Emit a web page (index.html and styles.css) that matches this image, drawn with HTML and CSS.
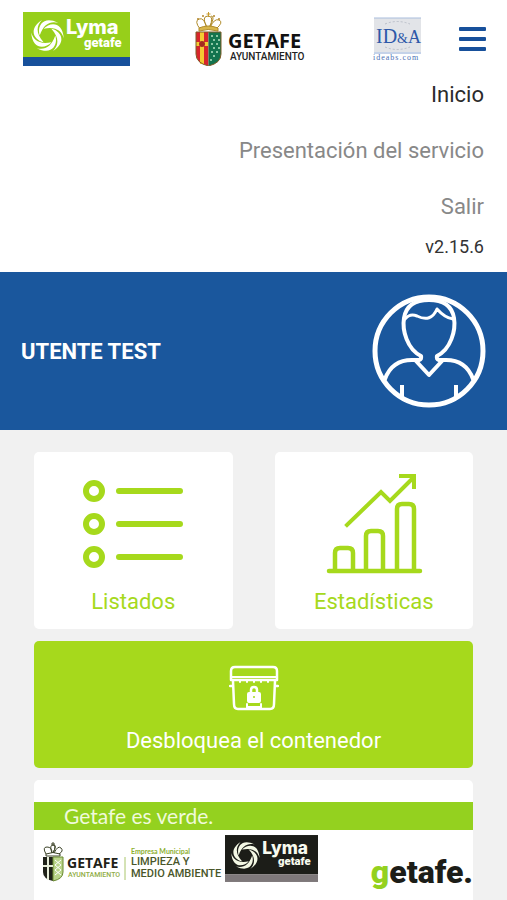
FILE: index.html
```html
<!DOCTYPE html>
<html lang="es">
<head>
<meta charset="utf-8">
<meta name="viewport" content="width=device-width, initial-scale=1">
<title>Lyma Getafe</title>
<link rel="stylesheet" href="styles.css">
</head>
<body>
<svg class="defs" aria-hidden="true">
  <defs>
    <path id="blade" d="M-8 0C-11 -9 -5 -21 11 -13C3 -15 -4 -12 -8 0Z"/>
    <symbol id="swirl" viewBox="-18 -18 36 36">
      <use href="#blade"/>
      <use href="#blade" transform="rotate(60)"/>
      <use href="#blade" transform="rotate(120)"/>
      <use href="#blade" transform="rotate(180)"/>
      <use href="#blade" transform="rotate(240)"/>
      <use href="#blade" transform="rotate(300)"/>
    </symbol>
  </defs>
</svg>

<header class="header">
  <a class="logo" href="#" aria-label="Lyma Getafe">
    <svg width="107" height="54" viewBox="0 0 107 54">
      <rect width="107" height="45" fill="#97cf1a"/>
      <rect y="45" width="107" height="9" fill="#17509b"/>
      <use href="#swirl" x="7" y="6" width="35" height="35" fill="#fff"/>
      <g fill="#fff">
        <text class="lyma-name" x="43" y="22" font-size="20">Lyma</text>
        <text class="lyma-sub" x="61" y="35" font-size="13">getafe</text>
      </g>
    </svg>
  </a>
  <a class="logo" href="#" aria-label="Getafe Ayuntamiento">
    <svg width="115" height="54" viewBox="0 0 115 54">
      <g stroke="#b08b2a" stroke-width="1" fill="none">
        <path d="M6 17Q0 9 5 7T13 16M13 16Q7 4 14 4T15 16M15 16Q22 4 17 4M16 16Q20 6 25 8T22 17" />
        <path d="M5 16Q14 12 24 16V19Q14 16 5 19Z" fill="#d8b64a"/>
        <path d="M14.500 0V5M12.500 2H16.500" stroke="#c79a2c"/>
      </g>
      <g fill="#b3862a"><circle cx="4" cy="7" r="1"/><circle cx="9" cy="4" r="1"/><circle cx="20" cy="4" r="1"/><circle cx="25" cy="7" r="1"/></g>
      <path d="M2 20H14.500V54Q2 51 2 42Z" fill="#d8252b"/>
      <path d="M14.500 20H27V42Q27 51 14.500 54Z" fill="#13744e"/>
      <path d="M8 20V52" stroke="#f4cb32" stroke-width="4"/>
      <path d="M2 32H14" stroke="#f4cb32" stroke-width="4"/>
      <circle cx="8" cy="32" r="3" fill="#a62b20"/>
      <path d="M17 24h2m3 0h2m-5 4h2m3 0h2m-9 4h2m3 0h2m-5 4h2m3 0h2m-9 4h2m3 0h2m-5 4h2m-5 4h2" stroke="#8cc7a4" stroke-width="2"/>
      <path d="M2 20H27V42Q27 51 14.500 54Q2 51 2 42Z" fill="none" stroke="#7e5c27"/>
      <text class="crest-name" x="34" y="36" font-size="20" fill="#111">GETAFE</text>
      <text class="crest-sub" x="36" y="48" font-size="10" fill="#222">AYUNTAMIENTO</text>
    </svg>
  </a>
  <div class="header-end">
    <a class="logo" href="#" aria-label="ideabs.com">
      <svg width="50" height="44" viewBox="0 0 50 44">
        <rect x="1" y="1" width="47" height="34" fill="#e2e4e8"/>
        <path d="M1 1H48" stroke="#a9bddc"/>
        <path d="M12 7Q24 2 37 7M12 30Q24 35 37 30" fill="none" stroke="#b9bec8" stroke-dasharray="2 2"/>
        <text class="serif" x="3" y="26" font-size="20" fill="#2d58a8">ID<tspan font-size="14">&amp;</tspan><tspan font-size="18">A</tspan></text>
        <path d="M1 36H48" stroke="#8ba6d3"/>
        <text class="domain" x="0" y="43" font-size="8" fill="#4c70b4">ideabs.com</text>
      </svg>
    </a>
    <button class="burger" type="button" aria-label="Menú"><span></span><span></span><span></span></button>
  </div>
</header>

<nav class="menu">
  <a class="active" href="#">Inicio</a>
  <a href="#">Presentación del servicio</a>
  <a href="#">Salir</a>
  <p class="version">v2.15.6</p>
</nav>

<section class="profile">
  <h1>UTENTE TEST</h1>
  <svg width="114" height="114" viewBox="0 0 114 114" fill="none" stroke="#fff" stroke-width="4" stroke-linecap="round" stroke-linejoin="round">
    <circle cx="57" cy="57" r="54" stroke-width="5"/>
    <path d="M13 85Q20 66 40 66H47Q50 65 49 62C35 55 30 36 32 24Q35 6 57 6T82 24C84 36 79 55 65 62Q64 65 67 66H74Q94 66 101 85"/>
    <path d="M33 25Q38 19 45 22Q59 29 65 15Q73 24 81 25" stroke-width="3"/>
    <path d="M44 67L57 81L70 67"/>
    <path d="M30 91V104M84 91V104" stroke-linecap="butt"/>
  </svg>
</section>

<main class="content">
  <div class="tiles">
    <a class="tile" href="#">
      <svg width="102" height="102" viewBox="0 0 102 102" fill="none" stroke="#a6d91c" stroke-width="6" stroke-linecap="round">
        <circle cx="12" cy="17" r="8"/><circle cx="12" cy="50" r="8"/><circle cx="12" cy="83" r="8"/>
        <path d="M37 17H98M37 50H98M37 83H98"/>
      </svg>
      <span>Listados</span>
    </a>
    <a class="tile" href="#">
      <svg width="102" height="102" viewBox="0 0 102 102" fill="none" stroke="#a6d91c" stroke-width="4.500" stroke-linecap="round">
        <path d="M6 97H97M12 96V79Q12 74 17 74H25Q30 74 30 79V96M43 96V62Q43 57 48 57H55Q60 57 60 62V96M74 96V35Q74 30 79 30H86Q91 30 91 35V96"/>
        <path d="M24 51L58 18L67 27L90 4M78 2H91V13" stroke-width="4" stroke-linecap="square"/>
      </svg>
      <span>Estadísticas</span>
    </a>
  </div>

  <button class="unlock" type="button">
    <svg width="50" height="46" viewBox="0 0 50 46" fill="none" stroke="#fff" stroke-width="2.500" stroke-linejoin="round" stroke-linecap="round">
      <path d="M2 15V6Q2 2 6 2H44Q48 2 48 6V15Z"/>
      <path d="M3 12H47" stroke-width="2"/>
      <path d="M4 16L5 39Q5 44 9 44H41Q45 44 45 39L46 16M1 21H4M46 21H49"/>
      <path d="M11 16v1m7-1v1m7-1v1m7-1v1m7-1v1" stroke-width="2"/>
      <path d="M18 44V39M32 44V39M19 42H31" stroke-width="2"/>
      <rect x="19" y="28" width="12" height="9" rx="1" fill="#fff" stroke-width="2"/>
      <path d="M22 27V25Q22 22 25 22T28 25V27"/>
      <circle cx="25" cy="32" r="1" fill="#a6d91c" stroke="none"/>
    </svg>
    <span>Desbloquea el contenedor</span>
  </button>

  <section class="banner">
    <p class="slogan">Getafe es verde.</p>
    <div class="partners">
      <svg width="180" height="42" viewBox="0 0 180 42">
        <g fill="none" stroke="#3c4328">
          <path d="M4 12Q0 5 5 5T10 11Q7 3 11 3T11 11Q15 3 12 3M12 11Q16 3 19 6T17 12M4 12Q11 9 18 12V14H4Z"/>
          <path d="M11 0V4M9 2H13"/>
        </g>
        <path d="M1 15H11V39Q1 37 1 30Z" fill="#20221a"/>
        <path d="M11 15H21V30Q21 37 11 39Z" fill="#b9d48a" stroke="#6b8a33"/>
        <path d="M6 15V38M1 24H11" stroke="#e9efdb" stroke-width="2"/>
        <path d="M13 18l6 5l-6 5l6 5M19 18l-6 5l6 5l-6 5" stroke="#fff" fill="none"/>
        <text class="crest-name" x="25" y="26" font-size="14" fill="#1f2218">GETAFE</text>
        <text class="crest-sub" x="26" y="35" font-size="7" fill="#90ad45">AYUNTAMIENTO</text>
        <path d="M83 15V38" stroke="#aac66c"/>
        <text class="company" x="89" y="12" font-size="7" fill="#8caf2f">Empresa Municipal</text>
        <text class="area" x="89" y="23" font-size="11" fill="#49562a">LIMPIEZA Y</text>
        <text class="area" x="89" y="35" font-size="11" fill="#49562a">MEDIO AMBIENTE</text>
      </svg>
      <svg class="lyma-dark" width="93" height="47" viewBox="0 0 107 54">
        <rect width="107" height="45" fill="#1c1d18"/>
        <rect y="45" width="107" height="9" fill="#7e787a"/>
        <use href="#swirl" x="6" y="6" width="35" height="35" fill="#f4f8e4"/>
        <g fill="#f8faee">
          <text class="lyma-name" x="43" y="22" font-size="20">Lyma</text>
          <text class="lyma-sub" x="61" y="35" font-size="13">getafe</text>
        </g>
      </svg>
      <p class="wordmark"><span>g</span>etafe.</p>
    </div>
  </section>
</main>
</body>
</html>
```

FILE: styles.css
```css
* { box-sizing: border-box; }
body {
  margin: 0;
  background: #f1f1f1;
  font-family: Roboto, "Liberation Sans", sans-serif;
  font-size: 22px;
  color: #333;
}
a { color: inherit; text-decoration: none; }
p, h1 { margin: 0; }
svg { display: block; flex: none; }
button { border: 0; font: inherit; cursor: pointer; }
.defs { position: absolute; width: 0; height: 0; }

.header {
  display: flex;
  justify-content: space-between;
  align-items: center;
  padding: 12px 21px 0 23px;
  background: #fff;
}
.header-end { display: flex; align-items: center; gap: 36px; }
.burger {
  display: flex;
  flex-direction: column;
  gap: 6px;
  padding: 0;
  background: none;
}
.burger span { width: 27px; height: 4px; border-radius: 1px; background: #17509b; }

.lyma-name { font-family: Inter, sans-serif; font-weight: 800; }
.lyma-sub { font-family: Roboto, sans-serif; font-weight: 900; }
.crest-name { font-family: "Open Sans", sans-serif; font-weight: 700; }
.crest-sub { font-family: Roboto, sans-serif; font-weight: 500; }
.serif { font-family: "Liberation Serif", serif; }
.domain { font-family: "Liberation Serif", serif; letter-spacing: 1px; }
.company { font-family: Lato, sans-serif; font-weight: 700; }
.area { font-family: Roboto, sans-serif; font-weight: 500; }

.menu {
  display: flex;
  flex-direction: column;
  align-items: flex-end;
  padding: 1px 23px 13px;
  background: #fff;
}
.menu a { line-height: 56px; color: #888; }
.menu .active { color: #2b2b2b; }
.version { font-size: 18px; line-height: 24px; }

.profile {
  display: flex;
  justify-content: space-between;
  align-items: center;
  padding: 22px 21px;
  background: #1a579d;
  color: #fff;
}
.profile h1 { font-size: 22px; font-weight: 700; }

.content {
  display: flex;
  flex-direction: column;
  gap: 12px;
  padding: 22px 34px 0;
}
.tiles { display: grid; grid-template-columns: 1fr 1fr; gap: 42px; }
.tile {
  display: flex;
  flex-direction: column;
  align-items: center;
  gap: 11px;
  padding: 22px 0 12px;
  border-radius: 5px;
  background: #fff;
  color: #a6d91c;
  line-height: 30px;
}
.unlock {
  display: flex;
  flex-direction: column;
  align-items: center;
  gap: 15px;
  padding: 24px 0 12px;
  border-radius: 5px;
  background: #a6d91c;
  color: #fff;
  line-height: 30px;
}
.banner { padding: 22px 0 24px; border-radius: 5px; background: #fff; }
.slogan {
  padding-left: 30px;
  background: #94d11f;
  color: #f0fadb;
  font-family: Lato, sans-serif;
  font-size: 21px;
  line-height: 28px;
}
.partners {
  display: flex;
  align-items: flex-start;
  padding: 5px 0 0 8px;
}
.partners > svg:first-child { margin-top: 7px; }
.lyma-dark { margin-left: 3px; }
.wordmark {
  margin-left: auto;
  padding-top: 19px;
  color: #1c1d18;
  font-size: 32px;
  font-weight: 900;
  line-height: 36px;
}
.wordmark span { color: #94d11f; }
```
